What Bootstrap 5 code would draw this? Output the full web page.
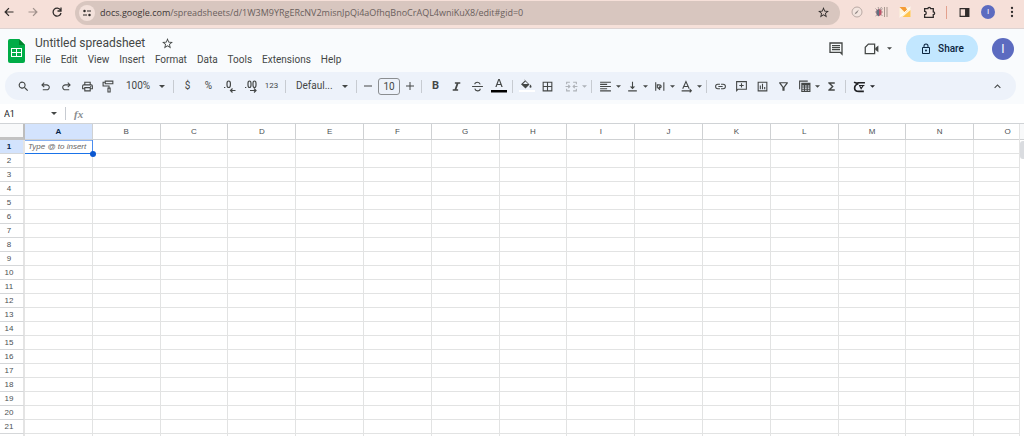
<!DOCTYPE html>
<html lang="en">
<head>
<meta charset="utf-8">
<meta name="viewport" content="width=device-width, initial-scale=1">
<title>Untitled spreadsheet</title>
<link href="https://cdn.jsdelivr.net/npm/bootstrap@5.3.0/dist/css/bootstrap.min.css" rel="stylesheet">
<style>
:root{--ink:#444746;--line:#e2e3e3}
body{font-family:Roboto,"Liberation Sans",sans-serif;font-size:10px;line-height:12px;color:var(--ink);background:#fff}
svg{display:block;fill:currentColor;flex:none}
button,.plain{border:0;background:none;padding:0;color:inherit;font:inherit;text-decoration:none}
button{display:flex;align-items:center;justify-content:center;flex:none}
.browser{height:29px;background:#f6e0d9;border-bottom:1px solid #ddd3d2;padding:0 3px 4px 3px;color:#302c2b}
.browser .round{width:24px;height:24px}
.browser .back{width:12px}
.browser .forward{margin-left:6px;color:#a1928d}
.address{height:24px;margin:1px 5px 0 6px;padding:0 10px 0 4px;border-radius:12px;background:#d8c6bf}
.site{width:16px;height:16px;border-radius:50%;background:#f3e1db}
.url{font-family:"Open Sans",sans-serif;font-size:9px;line-height:14px;color:#6a605d;margin-left:5px}
.url b{font-weight:400;color:#3b3635}
.ext{width:24px;height:24px}
.browser .rule{background:#e3a08d;margin:0 8px 0 5px}
.slim{width:18px}
.who{border-radius:50%;background:#5c6bc0;color:#fff}
.who.sm{width:14px;height:14px;font-size:8px}
.who.lg{width:22px;height:22px;font-size:12px;margin-left:14px}
.app{background:#f9fbfd}
.top{padding:6px 10px 0 7px;height:42px}
.titles{margin-left:9px}
.doc-title{width:118px;font-size:12px;line-height:16px;height:16px}
.menus{gap:10px;margin-top:3px}
.share{width:72px;height:27px;border-radius:14px;background:#c2e7ff;color:#0b2540;gap:6px;font-size:10px;font-weight:500;margin-left:14px}
.tools{height:28px;margin:1px 8px 4px 5px;padding:0 8px;border-radius:14px;background:#edf2fa}
.tb{width:21px;height:20px}
.tb.find{margin-right:1px}
.tb.narrow{width:16px}
.tb.tiny{font-size:8px}
.tb.strong{font-size:11px}
.combo{width:25px;height:20px;margin:0 1px;justify-content:space-between;padding-left:3px}
.rule{width:1px;height:13px;background:#c7cbd1;margin:0 3px;flex:none}
.pick{appearance:none;border:0;color:inherit;font-size:10px;line-height:16px;height:20px;padding:0 0 0 7px;background:url("data:image/svg+xml,%3Csvg xmlns='http://www.w3.org/2000/svg' viewBox='0 0 6 3'%3E%3Cpath d='M0 0h6L3 3z' fill='%23444746'/%3E%3C/svg%3E") no-repeat right 5px center/6px 3px}
.pick.zoomer{width:51px}
.pick.face{width:64px}
.size{width:22px;height:17px;margin:0 2px;border:1px solid #8b8e91;border-radius:3px;text-align:center;font-size:10px}
.formula{height:20px;background:#fff;border-bottom:1px solid #d0d3d6}
.pick.cellname{width:61px;margin-left:4px;padding:0;font-size:9px;color:#202124;background-position:right 8px center}
.fx{font:italic bold 11px/12px "Liberation Serif",serif;color:#8a8d90}
.sheet{flex:1;min-height:0}
.pane{flex:1;min-width:0;overflow:hidden}
.cells{table-layout:fixed;border-collapse:separate;border-spacing:0;width:calc(100% + 23px);font:8px/10px "Liberation Sans",sans-serif}
.cells .gutter{width:25px}
.cells th{font-weight:400;text-align:center;color:#4b4f53;padding:0}
.cells thead th{height:16px;border-right:1px solid #cfd1d3;border-bottom:1px solid #cfd1d3}
.cells thead th.corner{background:#f8f9fa;border-right:2px solid #bdbdbd;border-bottom:3px solid #c2c2c2}
.cells tbody th{height:14px;border-bottom:1px solid #d5d7d9;border-right:2px solid #e4e4e4;padding-right:5px}
.cells td{height:14px;border-right:1px solid var(--line);border-bottom:1px solid var(--line);padding:0}
.cells .on{background:#d3e3fd;color:#041e49;font-weight:700}
.cells td.live{position:relative;box-shadow:inset 0 1px #85b1f3;border-right-color:#4a8cee;border-bottom-color:#1a73e8;padding-left:3px;font-style:italic;color:#666;white-space:nowrap}
.live::after{content:"";position:absolute;right:-4px;bottom:-4px;width:6px;height:6px;border-radius:50%;background:#0b57d0}
.track{width:5px;border-left:1px solid #e4e4e4}
.track .headpart{height:16px;background:#f8f9fa;border-bottom:1px solid #cfd1d3}
.thumb{height:18px;margin-top:1px;border-radius:3px 0 0 3px;background:#dadce0}
</style>
</head>
<body class="vh-100 d-flex flex-column overflow-hidden">
<svg width="0" height="0" class="position-absolute">
<symbol id="down" viewBox="0 0 6 3"><path d="M0 0h6L3 3z"/></symbol>
<symbol id="star" viewBox="0 0 24 24"><path d="M22 9.240l-7.190-.620L12 2 9.190 8.630 2 9.240l5.460 4.730L5.820 21 12 17.270 18.180 21l-1.630-7.030L22 9.240zM12 15.400l-3.760 2.270 1-4.280-3.320-2.880 4.380-.380L12 6.100l1.710 4.040 4.380.380-3.320 2.880 1 4.280L12 15.400z"/></symbol>
</svg>

<nav class="browser d-flex align-items-center" aria-label="Browser">
<button class="round back" aria-label="Back"><svg width="12" height="12" viewBox="0 0 24 24"><path d="M21 10.800H7.200l5.600-5.600L11 3.500 2.500 12l8.500 8.500 1.800-1.700-5.600-5.600H21z"/></svg></button>
<button class="round forward" aria-label="Forward"><svg width="12" height="12" viewBox="0 0 24 24"><path d="M3 10.800h13.800l-5.600-5.600L13 3.500l8.500 8.500-8.500 8.500-1.800-1.700 5.600-5.600H3z"/></svg></button>
<button class="round" aria-label="Reload"><svg width="12" height="12" viewBox="0 0 24 24" fill="none" stroke="currentColor" stroke-width="2.600"><path style="fill:none" d="M19 8a8 8 0 1 0 1 6M20 3v7h-7"/></svg></button>
<div class="address d-flex align-items-center flex-grow-1">
<button class="site" aria-label="Site information"><svg width="10" height="10" viewBox="0 0 20 20"><path style="fill:none" stroke="currentColor" stroke-width="2" d="M10 6h8M2 14h8"/><circle cx="5" cy="6" r="2.500"/><circle cx="15" cy="14" r="2.500"/></svg></button>
<a href="#" class="plain url text-nowrap"><b>docs.google.com</b>/spreadsheets/d/1W3M9YRgERcNV2misnJpQi4aOfhqBnoCrAQL4wniKuX8/edit#gid=0</a>
<button class="ms-auto" aria-label="Bookmark"><svg width="13" height="13"><use href="#star"/></svg></button>
</div>
<button class="ext" aria-label="Compass extension"><svg width="12" height="12" viewBox="0 0 24 24"><circle cx="12" cy="12" r="10" fill="#f3e5df" stroke="#b9a9a4" stroke-width="2"/><path d="M7 17l2-4 7-6-4 7z" fill="#8b8380"/></svg></button>
<button class="ext" aria-label="Bug extension"><svg width="13" height="12" viewBox="0 0 26 24"><path d="M1 5l4 4M0 12h16M1 20l5-4M6 2l3 6M13 2l-3 6M15 5l-3 4M15 20l-4-4" fill="none" stroke="#8b807d" stroke-width="1.500"/><path d="M19 2v20M24 2v20" stroke="#a8988f" stroke-width="2"/><path d="M3 9q5-5 10 0v7q-5 8-10 0z" fill="#bd5369"/><path d="M8 6v15q-5-2-5-6V9z" fill="#607080"/></svg></button>
<button class="ext" aria-label="Mail extension"><svg width="12" height="12" viewBox="0 0 24 24"><path d="M1 3h22v18H1z" fill="#fff5dc"/><path d="M1 2h12l4 7-5 4z" fill="#f59b35"/><path d="M23 8v14H7z" fill="#ffc44e"/><path d="M1 22L23 2" stroke="#fff" stroke-width="2"/></svg></button>
<button class="ext" aria-label="Extensions"><svg width="13" height="13" viewBox="0 0 24 24"><path style="fill:none" stroke="currentColor" stroke-width="2.400" d="M3 5h6a2.500 2.500 0 0 1 5 0h5v6a2.500 2.500 0 0 1 0 5v5H3v-5a3 3 0 0 0 0-6z"/></svg></button>
<span class="rule"></span>
<button class="ext slim" aria-label="Side panel"><svg width="11" height="11" viewBox="0 0 20 20"><path d="M1 2h18v16H1zM3 4v12h8V4z" fill-rule="evenodd"/></svg></button>
<button class="who sm mx-2" aria-label="Profile">I</button>
<button class="slim" aria-label="Browser menu"><svg width="12" height="12" viewBox="0 0 24 24"><circle cx="12" cy="4" r="2.300"/><circle cx="12" cy="12" r="2.300"/><circle cx="12" cy="20" r="2.300"/></svg></button>
</nav>

<header class="app">
<div class="top d-flex align-items-start">
<a href="#" aria-label="Sheets home" class="mt-1"><svg width="19" height="25" viewBox="0 0 19 25"><path d="M3 0h9l6 6v16q0 2-2 2H3q-2 0-2-2V2q0-2 2-2z" fill="#00ac47"/><path d="M12 0l6 6h-6z" fill="#00832d"/><path d="M4 9h11v9H4zM5 10v3h4v-3zm5 0v3h4v-3zm-5 4v3h4v-3zm5 0v3h4v-3z" fill="#fff" fill-rule="evenodd"/></svg></a>
<div class="titles">
<div class="d-flex align-items-center"><input class="plain doc-title" aria-label="Document title" value="Untitled spreadsheet"><button class="ms-2" aria-label="Star"><svg width="13" height="13"><use href="#star"/></svg></button></div>
<nav class="menus d-flex" aria-label="Menu"><button>File</button><button>Edit</button><button>View</button><button>Insert</button><button>Format</button><button>Data</button><button>Tools</button><button>Extensions</button><button>Help</button></nav>
</div>
<div class="ms-auto d-flex align-items-center">
<button aria-label="Comments" class="me-3"><svg width="16" height="16" viewBox="0 0 24 24"><path d="M2 2h20v20l-4-4H2zM4 4v12h15l1 1V4zM6 12h12v2H6zM6 9h12v2H6zM6 6h12v2H6z" fill-rule="evenodd"/></svg></button>
<button aria-label="Join a call" class="gap-2 ms-1"><svg width="15" height="15" viewBox="0 0 24 24"><path style="fill:none" stroke="currentColor" stroke-width="2" d="M7 5h10v15H2V10z"/><path d="M18 11l5-4v11l-5-4z"/></svg><svg width="5" height="3"><use href="#down"/></svg></button>
<button class="share"><svg width="12" height="12" viewBox="0 0 24 24"><path d="M18 8h-1V6A5 5 0 0 0 7 6v2H6a2 2 0 0 0-2 2v10c0 1.100.9 2 2 2h12a2 2 0 0 0 2-2V10a2 2 0 0 0-2-2zM9 6a3 3 0 0 1 6 0v2H9zm9 14H6V10h12zm-6-3a2 2 0 1 0 0-4 2 2 0 0 0 0 4z"/></svg>Share</button>
<button class="who lg" aria-label="Account">I</button>
</div>
</div>

<div class="tools d-flex align-items-center" role="toolbar" aria-label="Main">
<button class="tb find" aria-label="Search"><svg width="13" height="13" viewBox="0 0 24 24"><path d="M15.500 14h-.8l-.3-.3a6.500 6.500 0 1 0-.7.7l.3.300v.8l5 5 1.500-1.500zM9.500 14a4.500 4.500 0 1 1 0-9 4.500 4.500 0 0 1 0 9z"/></svg></button>
<button class="tb" aria-label="Undo"><svg width="13" height="13" viewBox="0 0 24 24"><path d="M7 19v-2h7.100q1.600 0 2.700-1t1.200-2.500-1.200-2.500-2.700-1H7.800l2.600 2.600L9 14 4 9l5-5 1.400 1.400L7.800 8h6.300q2.400 0 4.200 1.600T20 13.500t-1.700 3.900T14.100 19z"/></svg></button>
<button class="tb" aria-label="Redo"><svg width="13" height="13" viewBox="0 0 24 24"><path d="M17 19v-2H9.900q-1.600 0-2.700-1T6 13.500 7.200 11t2.700-1h6.300l-2.600 2.600L15 14l5-5-5-5-1.400 1.400L16.200 8H9.900Q7.500 8 5.700 9.600T4 13.500t1.700 3.900T9.900 19z"/></svg></button>
<button class="tb" aria-label="Print"><svg width="13" height="13" viewBox="0 0 24 24"><path fill-rule="evenodd" d="M19 8h-1V3H6v5H5a3 3 0 0 0-3 3v6h4v4h12v-4h4v-6a3 3 0 0 0-3-3zM8 5h8v3H8zm8 14H8v-4h8zm2-4v-2H6v2H4v-4q0-1 1-1h14q1 0 1 1v4zM17 11h2v2h-2z"/></svg></button>
<button class="tb" aria-label="Paint format"><svg width="13" height="13" viewBox="0 0 24 24"><path style="fill:none" stroke="currentColor" stroke-width="2" d="M6 2h14v5H6zM6 4H2v7h11v4M11 15h4v7h-4z"/></svg></button>
<select class="pick zoomer" aria-label="Zoom"><option>100%</option></select>
<span class="rule"></span>
<button class="tb" aria-label="Currency">$</button><button class="tb" aria-label="Percent">%</button>
<button class="tb" aria-label="Decrease decimals"><svg width="13" height="14" viewBox="0 0 13 14"><path style="fill:none" stroke="currentColor" stroke-width="1.200" d="M1 8.500h1.300M4 4.500q0-2.500 1.700-2.500t1.700 2.500v1.500q0 2.500-1.700 2.500T4 6zM12.500 11.500h-5M9.500 9.500l-2 2 2 2"/></svg></button>
<button class="tb" aria-label="Increase decimals"><svg width="14" height="14" viewBox="0 0 14 14"><path style="fill:none" stroke="currentColor" stroke-width="1.200" d="M1 8.500h1.300M4 4.500Q4 2 5.500 2T7 4.500V6q0 2.500-1.500 2.500T4 6zM9 4.500Q9 2 10.500 2T12 4.500V6q0 2.500-1.500 2.500T9 6zM6 11.500h6M10 9.500l2 2-2 2"/></svg></button>
<button class="tb tiny" aria-label="More formats">123</button>
<span class="rule"></span>
<select class="pick face" aria-label="Font"><option>Defaul...</option></select>
<span class="rule"></span>
<button class="tb narrow" aria-label="Decrease font size"><svg width="8" height="8" viewBox="0 0 8 8"><path d="M0 3.500h8v1H0z"/></svg></button>
<input class="plain size" aria-label="Font size" value="10">
<button class="tb narrow" aria-label="Increase font size"><svg width="8" height="8" viewBox="0 0 8 8"><path d="M0 3.500h3.500V0h1v3.500H8v1H4.500V8h-1V4.500H0z"/></svg></button>
<span class="rule"></span>
<button class="tb strong fw-bold" aria-label="Bold">B</button>
<button class="tb" aria-label="Italic"><svg width="13" height="13" viewBox="0 0 24 24"><path d="M9 4v3h3l-3.500 10H5v3h10v-3h-3l3.500-10H19V4z"/></svg></button>
<button class="tb" aria-label="Strikethrough"><svg width="13" height="13" viewBox="0 0 24 24"><path style="fill:none" stroke="currentColor" stroke-width="2" d="M2 12h20M17 8q-1-4-5-4-5 0-5 4M7 16q1 4 5 4 5 0 5-4"/></svg></button>
<button class="tb" aria-label="Text color"><svg width="16" height="14" viewBox="0 0 16 14"><path d="M7.300 0h1.400l3 8h-1.300l-.7-2H6.300l-.7 2H4.300zM6.700 4.900h2.600L8 1.300z"/><path d="M0 11h16v2.500H0z" fill="#000"/></svg></button>
<span class="rule"></span>
<button class="tb" aria-label="Fill color"><svg width="16" height="16" viewBox="0 0 16 16"><path d="M5 1l5.500 5.500-4 4L2 6.300 6 2.500z"/><path d="M4 6l2.500-2.500L9 6z" fill="#edf2fa"/><path d="M11.500 6.500q2 3 0 3.300-2-.3 0-3.300z"/><path d="M0 12h16v2H0z" fill="#fff"/></svg></button>
<button class="tb" aria-label="Borders"><svg width="13" height="13" viewBox="0 0 24 24"><path fill-rule="evenodd" d="M3 3h18v18H3zM5 5v6h6V5zm8 0v6h6V5zm-8 8v6h6v-6zm8 0v6h6v-6z"/></svg></button>
<button class="combo ms-1" aria-label="Merge cells" style="color:#aeb2b8"><svg width="13" height="13" viewBox="0 0 24 24"><path style="fill:none" stroke="currentColor" stroke-width="2" d="M3 8V4h6M15 4h6v4M3 16v4h6M15 20h6v-4M1 12h8M6 9l3 3-3 3M23 12h-8M18 9l-3 3 3 3"/></svg><svg width="5" height="3"><use href="#down"/></svg></button>
<span class="rule"></span>
<button class="combo" aria-label="Horizontal align"><svg width="13" height="13" viewBox="0 0 24 24"><path d="M2 3h20v2H2zM2 7h13v2H2zM2 11h20v2H2zM2 15h13v2H2zM2 19h20v2H2z"/></svg><svg width="5" height="3"><use href="#down"/></svg></button>
<button class="combo" aria-label="Vertical align"><svg width="13" height="13" viewBox="0 0 24 24"><path d="M4 19h16v2H4zM11 3h2v9h4l-5 5-5-5h4z"/></svg><svg width="5" height="3"><use href="#down"/></svg></button>
<button class="combo" aria-label="Text wrapping"><svg width="13" height="13" viewBox="0 0 24 24"><path style="fill:none" stroke="currentColor" stroke-width="2" d="M5 4v16M20 4v16M8 15V9h3q4 0 4 3t-4 3M13 12l-3 3 3 3"/></svg><svg width="5" height="3"><use href="#down"/></svg></button>
<button class="combo" aria-label="Text rotation"><svg width="13" height="13" viewBox="0 0 24 24"><path style="fill:none" stroke="currentColor" stroke-width="2" d="M5 16l6-13 6 13M7 12h8M3 20h18M18 17l3 3-3 3"/></svg><svg width="5" height="3"><use href="#down"/></svg></button>
<span class="rule"></span>
<button class="tb" aria-label="Insert link"><svg width="13" height="13" viewBox="0 0 24 24"><path d="M3.900 12A3.100 3.100 0 0 1 7 8.900h4V7H7a5 5 0 0 0 0 10h4v-1.900H7A3.100 3.100 0 0 1 3.900 12zM8 13h8v-2H8zm9-6h-4v1.900h4a3.100 3.100 0 0 1 0 6.200h-4V17h4a5 5 0 0 0 0-10z"/></svg></button>
<button class="tb" aria-label="Insert comment"><svg width="13" height="13" viewBox="0 0 24 24"><path fill-rule="evenodd" d="M2 2h20v16H6l-4 4zM4 4v13l1-1h15V4zM11 6h2v3h3v2h-3v3h-2v-3H8V9h3z"/></svg></button>
<button class="tb" aria-label="Insert chart"><svg width="13" height="13" viewBox="0 0 24 24"><path fill-rule="evenodd" d="M3 3h18v18H3zM5 5v14h14V5zM7 10h2v7H7zM11 7h2v10h-2zM15 13h2v4h-2z"/></svg></button>
<button class="tb" aria-label="Filter"><svg width="13" height="13" viewBox="0 0 24 24"><path fill-rule="evenodd" d="M4 4h16v2l-6 8v6h-4v-6L4 6zm3 2l5 7 5-7z"/></svg></button>
<button class="combo" aria-label="Table views"><svg width="13" height="13" viewBox="0 0 24 24"><path fill-rule="evenodd" d="M2 1h16v2H4v14H2zM6 5h17v17H6zM8 10v2h3v-2zm5 0v2h3v-2zm5 0v2h3v-2zM8 14v2h3v-2zm5 0v2h3v-2zm5 0v2h3v-2zM8 18v2h3v-2zm5 0v2h3v-2zm5 0v2h3v-2z"/></svg><svg width="5" height="3"><use href="#down"/></svg></button>
<button class="tb" aria-label="Functions"><svg width="13" height="13" viewBox="0 0 24 24"><path d="M18 4H6v2l6.500 6L6 18v2h12v-3h-7l5-5-5-5h7z"/></svg></button>
<span class="rule"></span>
<button class="combo" aria-label="Input tools" style="color:#202124"><svg width="13" height="13" viewBox="0 0 24 24"><path style="fill:none" stroke="currentColor" stroke-width="3" d="M2 4q4 3 8 1h12M10 7q-7 2-7 8 0 6 8 6h9"/><path style="fill:none" stroke="currentColor" stroke-width="2" d="M11 10h10M12 10l3 6 4-6"/></svg><svg width="5" height="3"><use href="#down"/></svg></button>
<button class="tb ms-auto" aria-label="Hide the menus"><svg width="13" height="13" viewBox="0 0 24 24"><path d="M12 8l-6 6 1.400 1.400L12 10.800l4.600 4.600L18 14z"/></svg></button>
</div>
</header>

<div class="formula d-flex align-items-center">
<select class="pick cellname" aria-label="Name box"><option>A1</option></select>
<span class="rule mx-0"></span>
<span class="fx ms-2">fx</span>
</div>

<main class="sheet d-flex">
<div class="pane"><table class="cells"><colgroup><col class="gutter"></colgroup><thead><tr><th class="corner"></th></tr></thead><tbody></tbody></table></div>
<div class="track"><div class="headpart"></div><div class="thumb"></div></div>
</main>
<script src="https://cdn.jsdelivr.net/npm/bootstrap@5.3.0/dist/js/bootstrap.bundle.min.js"></script>
<script>
const letters = 'ABCDEFGHIJKLMNO'.split('');
const head = document.querySelector('.cells thead tr');
const body = document.querySelector('.cells tbody');
letters.forEach((l, i) => head.insertAdjacentHTML('beforeend', `<th scope="col"${i ? '' : ' class="on"'}>${l}</th>`));
// rows that fit in the window are numbered; one more fills the remainder
const full = Math.floor((innerHeight - 140) / 14);
for (let r = 1; r <= full + 1; r++) {
  const cells = letters.map((l, i) => r === 1 && i === 0 ? '<td class="live">Type @ to insert</td>' : '<td></td>').join('');
  body.insertAdjacentHTML('beforeend', `<tr><th scope="row"${r === 1 ? ' class="on"' : ''}>${r <= full ? r : ''}</th>${cells}</tr>`);
}
</script>
</body>
</html>
